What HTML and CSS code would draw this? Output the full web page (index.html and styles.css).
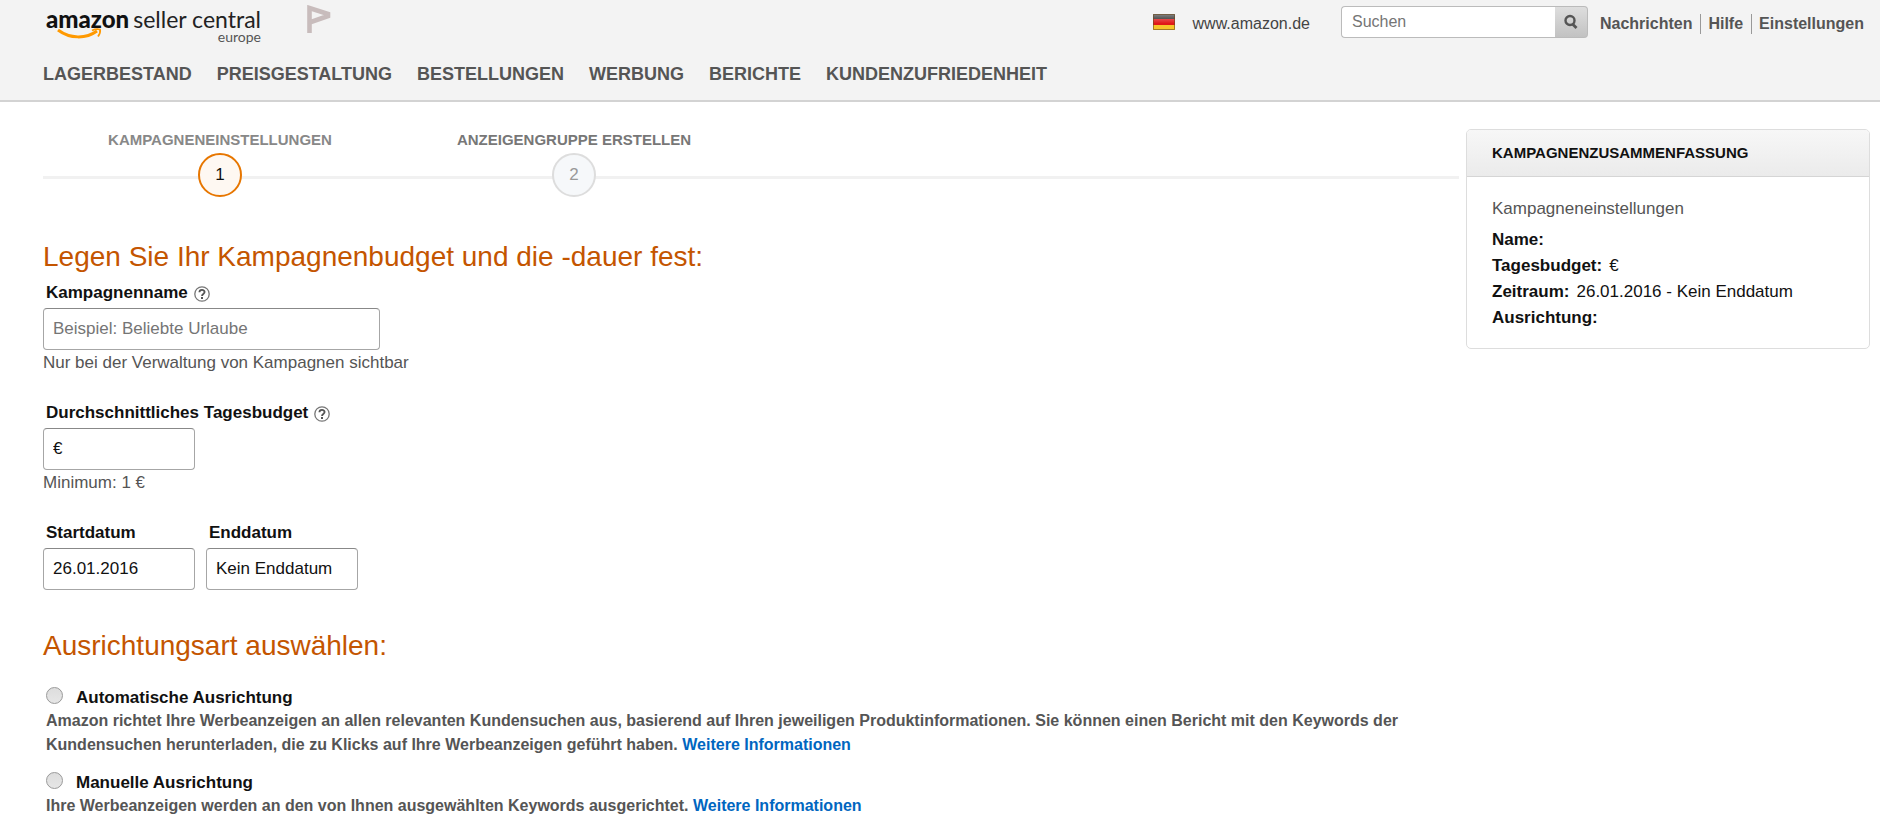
FILE: index.html
```
<!DOCTYPE html>
<html lang="de">
<head>
<meta charset="utf-8">
<meta name="viewport" content="width=device-width, initial-scale=1">
<title>Amazon Seller Central Europe</title>
<link rel="stylesheet" href="styles.css">
</head>
<body>
<header class="header">
  <div class="topbar">
    <a class="logo" href="#" aria-label="Amazon Seller Central Europe">
      <svg width="218" height="48" viewBox="0 0 218 48">
        <text class="logo-brand" x="2" y="28">amazon</text>
        <text class="logo-name" x="217" y="28" text-anchor="end">seller central</text>
        <text class="logo-region" x="217" y="42" text-anchor="end">europe</text>
        <path d="M14 30c12 9 28 9 39 1" fill="none" stroke="#f90" stroke-width="3"/>
        <path d="M48 30.500c3-1.500 6-1.500 8-1 .5 2-.5 5-2 7" fill="none" stroke="#f90" stroke-width="1.800"/>
      </svg>
    </a>
    <a class="flag-link" href="#" aria-label="Markierung">
      <svg width="26" height="29" viewBox="0 0 26 29"><path d="M3.500 28V3L22 9v2L3.500 17.500" fill="none" stroke="#c8bcbc" stroke-width="4.600"/></svg>
    </a>
    <div class="tools">
      <a class="market" href="#">
        <svg class="market-flag" width="22" height="16" viewBox="0 0 22 16">
          <defs><linearGradient id="shine" x2="0" y2="1"><stop offset="0" stop-color="#fff" stop-opacity=".45"/><stop offset=".6" stop-color="#fff" stop-opacity="0"/></linearGradient></defs>
          <path fill="#222" d="M0 0h22v6H0z"/><path fill="#e01818" d="M0 5h22v6H0z"/><path fill="#f6c62a" d="M0 11h22v5H0z"/>
          <path fill="url(#shine)" d="M0 0h22v16H0z"/><path fill="none" stroke="#6b4a1e" stroke-opacity=".6" d="M.5.5h21v15H.5z"/>
        </svg>
        <span>www.amazon.de</span>
      </a>
      <form class="search">
        <input class="search-input" type="search" placeholder="Suchen" aria-label="Suchen">
        <button class="search-button" type="button" aria-label="Suche starten">
          <svg width="16" height="16" viewBox="0 0 16 16"><circle cx="7" cy="6.500" r="4.500" fill="none" stroke="#555" stroke-width="2.400"/><path d="M9.500 10l4 4" stroke="#555" stroke-width="2.800"/></svg>
        </button>
      </form>
      <nav class="links" aria-label="Konto">
        <a href="#">Nachrichten</a><a href="#">Hilfe</a><a href="#">Einstellungen</a>
      </nav>
    </div>
  </div>
  <nav class="menu" aria-label="Hauptmenü">
    <a href="#">LAGERBESTAND</a><a href="#">PREISGESTALTUNG</a><a href="#">BESTELLUNGEN</a><a href="#">WERBUNG</a><a href="#">BERICHTE</a><a href="#">KUNDENZUFRIEDENHEIT</a>
  </nav>
</header>
<div class="page">
  <main class="content">
    <ol class="steps">
      <li class="step step-active"><span class="step-label">KAMPAGNENEINSTELLUNGEN</span><span class="step-number">1</span></li>
      <li class="step"><span class="step-label">ANZEIGENGRUPPE ERSTELLEN</span><span class="step-number">2</span></li>
    </ol>
    <form>
      <h1 class="title">Legen Sie Ihr Kampagnenbudget und die -dauer fest:</h1>
      <div class="field">
        <div class="label-row">
          <label for="name">Kampagnenname</label>
          <button class="help" type="button" aria-label="Hilfe zum Kampagnennamen"><svg width="16" height="16" viewBox="0 0 16 16"><circle cx="8" cy="8" r="7.200" fill="none" stroke="#777" stroke-width="1.300"/><path d="M5.400 6.300c0-3.200 5.200-3.200 5.200-.2C10.600 8 8 8 8 9.900" fill="none" stroke="#555" stroke-width="1.800"/><path d="M7 11h2v2H7z" fill="#555"/></svg></button>
        </div>
        <input class="input input-wide" id="name" type="text" placeholder="Beispiel: Beliebte Urlaube">
        <p class="hint">Nur bei der Verwaltung von Kampagnen sichtbar</p>
      </div>
      <div class="field">
        <div class="label-row">
          <label for="budget">Durchschnittliches Tagesbudget</label>
          <button class="help" type="button" aria-label="Hilfe zum Tagesbudget"><svg width="16" height="16" viewBox="0 0 16 16"><circle cx="8" cy="8" r="7.200" fill="none" stroke="#777" stroke-width="1.300"/><path d="M5.400 6.300c0-3.200 5.200-3.200 5.200-.2C10.600 8 8 8 8 9.900" fill="none" stroke="#555" stroke-width="1.800"/><path d="M7 11h2v2H7z" fill="#555"/></svg></button>
        </div>
        <input class="input" id="budget" type="text" value="€">
        <p class="hint">Minimum: 1 €</p>
      </div>
      <div class="dates">
        <div class="date">
          <div class="label-row"><label for="start">Startdatum</label></div>
          <input class="input" id="start" type="text" value="26.01.2016">
        </div>
        <div class="date">
          <div class="label-row"><label for="end">Enddatum</label></div>
          <input class="input" id="end" type="text" value="Kein Enddatum">
        </div>
      </div>
      <h2 class="title">Ausrichtungsart auswählen:</h2>
      <div class="options">
        <div class="option">
          <div class="option-head"><input class="radio" type="radio" name="targeting" id="auto"><label for="auto">Automatische Ausrichtung</label></div>
          <p class="option-text">Amazon richtet Ihre Werbeanzeigen an allen relevanten Kundensuchen aus, basierend auf Ihren jeweiligen Produktinformationen. Sie können einen Bericht mit den Keywords der Kundensuchen herunterladen, die zu Klicks auf Ihre Werbeanzeigen geführt haben. <a href="#">Weitere Informationen</a></p>
        </div>
        <div class="option">
          <div class="option-head"><input class="radio" type="radio" name="targeting" id="manual"><label for="manual">Manuelle Ausrichtung</label></div>
          <p class="option-text">Ihre Werbeanzeigen werden an den von Ihnen ausgewählten Keywords ausgerichtet. <a href="#">Weitere Informationen</a></p>
        </div>
      </div>
    </form>
  </main>
  <aside class="summary">
    <h2 class="summary-title">KAMPAGNENZUSAMMENFASSUNG</h2>
    <div class="summary-body">
      <h3 class="summary-section">Kampagneneinstellungen</h3>
      <dl class="facts">
        <div class="fact"><dt>Name:</dt><dd></dd></div>
        <div class="fact"><dt>Tagesbudget:</dt><dd>€</dd></div>
        <div class="fact"><dt>Zeitraum:</dt><dd>26.01.2016 - Kein Enddatum</dd></div>
        <div class="fact"><dt>Ausrichtung:</dt><dd></dd></div>
      </dl>
    </div>
  </aside>
</div>
</body>
</html>
```
FILE: styles.css
```
* { box-sizing: border-box; }
body {
  margin: 0;
  background: #fff;
  color: #111;
  font: 17px/24px "Liberation Sans", Arial, sans-serif;
}
h1, h2, h3, p, ol, dl, dd { margin: 0; padding: 0; }
a { color: inherit; text-decoration: none; }
svg { display: block; }
input, button { font: inherit; color: inherit; }

.header {
  background: #f3f3f3;
  border-bottom: 2px solid #d3d3d3;
  color: #555;
}
.topbar {
  display: flex;
  align-items: flex-start;
  height: 62px;
  padding: 0 16px 0 44px;
}
.logo-brand { font: 900 24px Lato, sans-serif; fill: #111; }
.logo-name { font: 400 23px Lato, sans-serif; fill: #222; }
.logo-region { font: 400 14px Lato, sans-serif; fill: #555; }
.flag-link { margin: 5px 0 0 44px; }
.tools {
  display: flex;
  align-items: center;
  margin-left: auto;
  padding-top: 6px;
}
.market {
  display: flex;
  align-items: center;
  gap: 18px;
  margin-right: 31px;
  color: #444;
  font-size: 16px;
}
.market span { padding-top: 4px; }
.search { display: flex; margin-right: 12px; }
.search-input {
  width: 214px;
  height: 32px;
  padding: 0 10px;
  background: #fff;
  border: 1px solid #bbb;
  border-right: 0;
  border-radius: 4px 0 0 4px;
  font-size: 16px;
  appearance: none;
}
.search-input::placeholder, .input::placeholder { color: #757575; opacity: 1; }
.search-button {
  display: grid;
  place-items: center;
  width: 33px;
  height: 32px;
  padding: 0;
  background: linear-gradient(#dedede, #c2c2c2);
  border: 1px solid #bbb;
  border-left: 0;
  border-radius: 0 4px 4px 0;
}
.links { display: flex; padding-top: 3px; font-size: 16px; font-weight: 700; line-height: 20px; }
.links a + a { margin-left: 8px; padding-left: 7px; border-left: 1px solid #999; }
.menu {
  display: flex;
  gap: 25px;
  padding: 0 43px 14px;
  font-size: 18px;
  font-weight: 700;
}

.page {
  display: grid;
  grid-template-columns: minmax(0, 1fr) 404px;
  align-items: start;
  gap: 7px;
  padding: 27px 10px 0 43px;
}
.steps {
  display: grid;
  grid-template-columns: repeat(4, 1fr);
  margin-bottom: 40px;
  background: linear-gradient(#f1f1f1, #f1f1f1) 0 47px / 100% 3px no-repeat;
  list-style: none;
}
.step { display: flex; flex-direction: column; align-items: center; gap: 2px; color: #777; }
.step-label { font-size: 15px; font-weight: 700; line-height: 22px; white-space: nowrap; }
.step-active .step-label { color: #888; }
.step-number {
  width: 44px;
  height: 44px;
  background: #f6f8fa;
  border: 2px solid #ddd;
  border-radius: 50%;
  color: #999;
  line-height: 40px;
  text-align: center;
}
.step-active .step-number { background: #fef8f2; border-color: #e77600; color: #111; }

.title { color: #c45500; font-size: 28px; font-weight: 400; line-height: 40px; }
.label-row {
  display: flex;
  align-items: center;
  gap: 6px;
  height: 31px;
  padding-left: 3px;
  font-weight: 700;
}
.help { padding: 3px 0 0; background: none; border: 0; }
.input {
  display: block;
  width: 152px;
  height: 42px;
  padding: 0 9px;
  background: #fff;
  border: 1px solid #a6a6a6;
  border-top-color: #888;
  border-radius: 4px;
}
.input-wide { width: 337px; }
.hint { color: #555; line-height: 26px; }
.field { margin-bottom: 21px; }
.dates { display: flex; gap: 11px; margin-bottom: 36px; }

.options { display: grid; gap: 15px; padding: 21px 0 14px 3px; }
.option-head { display: flex; align-items: flex-start; gap: 13px; font-weight: 700; line-height: 22px; }
.radio {
  width: 17px;
  height: 17px;
  margin: 0;
  appearance: none;
  background: linear-gradient(#ddd, #e6e6e6);
  border: 1px solid #999;
  border-radius: 50%;
}
.option-text { color: #555; font-size: 16px; font-weight: 700; }
.option-text a { color: #0066c0; }

.summary { border: 1px solid #ddd; border-radius: 5px; overflow: hidden; }
.summary-title {
  padding: 11px 25px;
  background: linear-gradient(#f7f7f7, #ebebeb);
  border-bottom: 1px solid #d5d5d5;
  font-size: 15px;
  line-height: 24px;
}
.summary-body { padding: 19px 25px 17px; }
.summary-section { margin-bottom: 5px; color: #555; font-size: 17px; font-weight: 400; line-height: 26px; }
.facts { line-height: 26px; }
.fact { display: flex; gap: 7px; }
.fact dt { font-weight: 700; }
```
